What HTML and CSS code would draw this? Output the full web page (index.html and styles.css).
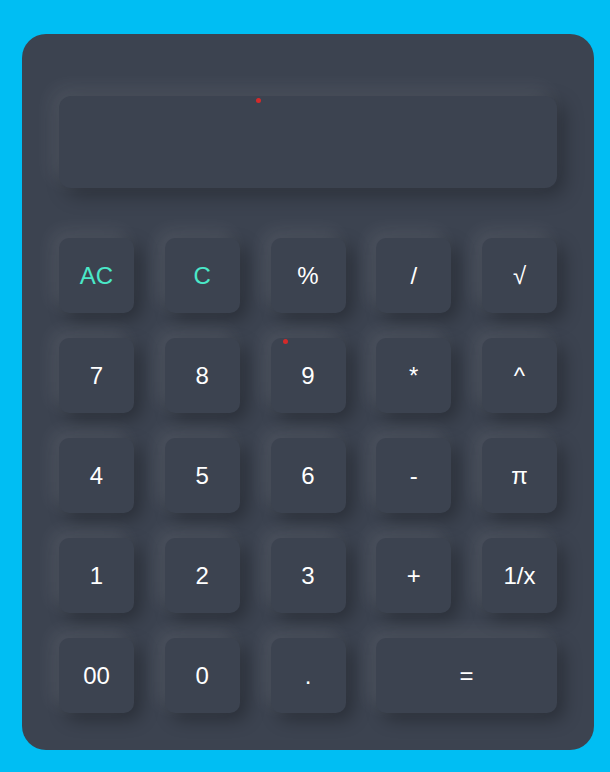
FILE: index.html
```html
<!DOCTYPE html>
<html>
<head>
<meta charset="utf-8">
<link rel="stylesheet" href="styles.css">
</head>
<body>
<div class="calc">
  <div class="display"></div>
  <div class="keys">
    <div class="key accent">AC</div>
    <div class="key accent">C</div>
    <div class="key">%</div>
    <div class="key">/</div>
    <div class="key">√</div>
    <div class="key">7</div>
    <div class="key">8</div>
    <div class="key">9</div>
    <div class="key">*</div>
    <div class="key">^</div>
    <div class="key">4</div>
    <div class="key">5</div>
    <div class="key">6</div>
    <div class="key">-</div>
    <div class="key">π</div>
    <div class="key">1</div>
    <div class="key">2</div>
    <div class="key">3</div>
    <div class="key">+</div>
    <div class="key">1/x</div>
    <div class="key">00</div>
    <div class="key">0</div>
    <div class="key">.</div>
    <div class="key wide">=</div>
  </div>
  <span class="dot dot-a"></span>
  <span class="dot dot-b"></span>
</div>
</body>
</html>
```
FILE: styles.css
```css
html, body {
  margin: 0;
  padding: 0;
  background: #00bef3;
}
body {
  padding: 34px 16px 22px 22px;
  font-family: "Liberation Sans", Arial, sans-serif;
}
.calc {
  position: relative;
  box-sizing: border-box;
  width: 572px;
  height: 716px;
  padding: 62px 37px 37px 37px;
  background: #3c4350;
  border-radius: 24px;
}
.display {
  height: 92px;
  border-radius: 12px;
  background: #3c4350;
  box-shadow: -7px -7px 20px rgba(255,255,255,0.09), 7px 7px 20px rgba(0,0,0,0.3);
}
.keys {
  margin-top: 50px;
  display: grid;
  grid-template-columns: repeat(5, 75px);
  grid-auto-rows: 75px;
  justify-content: space-between;
  row-gap: 25px;
}
.key {
  display: flex;
  align-items: center;
  justify-content: center;
  border-radius: 10px;
  background: #3c4350;
  color: #ffffff;
  font-size: 24px;
  box-shadow: -7px -7px 18px rgba(255,255,255,0.09), 7px 7px 18px rgba(0,0,0,0.3);
}
.key.accent {
  color: #4ae8c8;
}
.key.wide {
  grid-column: 4 / span 2;
}
.dot {
  position: absolute;
  width: 5px;
  height: 5px;
  border-radius: 50%;
  background: #d42a2a;
}
.dot-a { left: 234px; top: 64px; }
.dot-b { left: 261px; top: 305px; }
```
